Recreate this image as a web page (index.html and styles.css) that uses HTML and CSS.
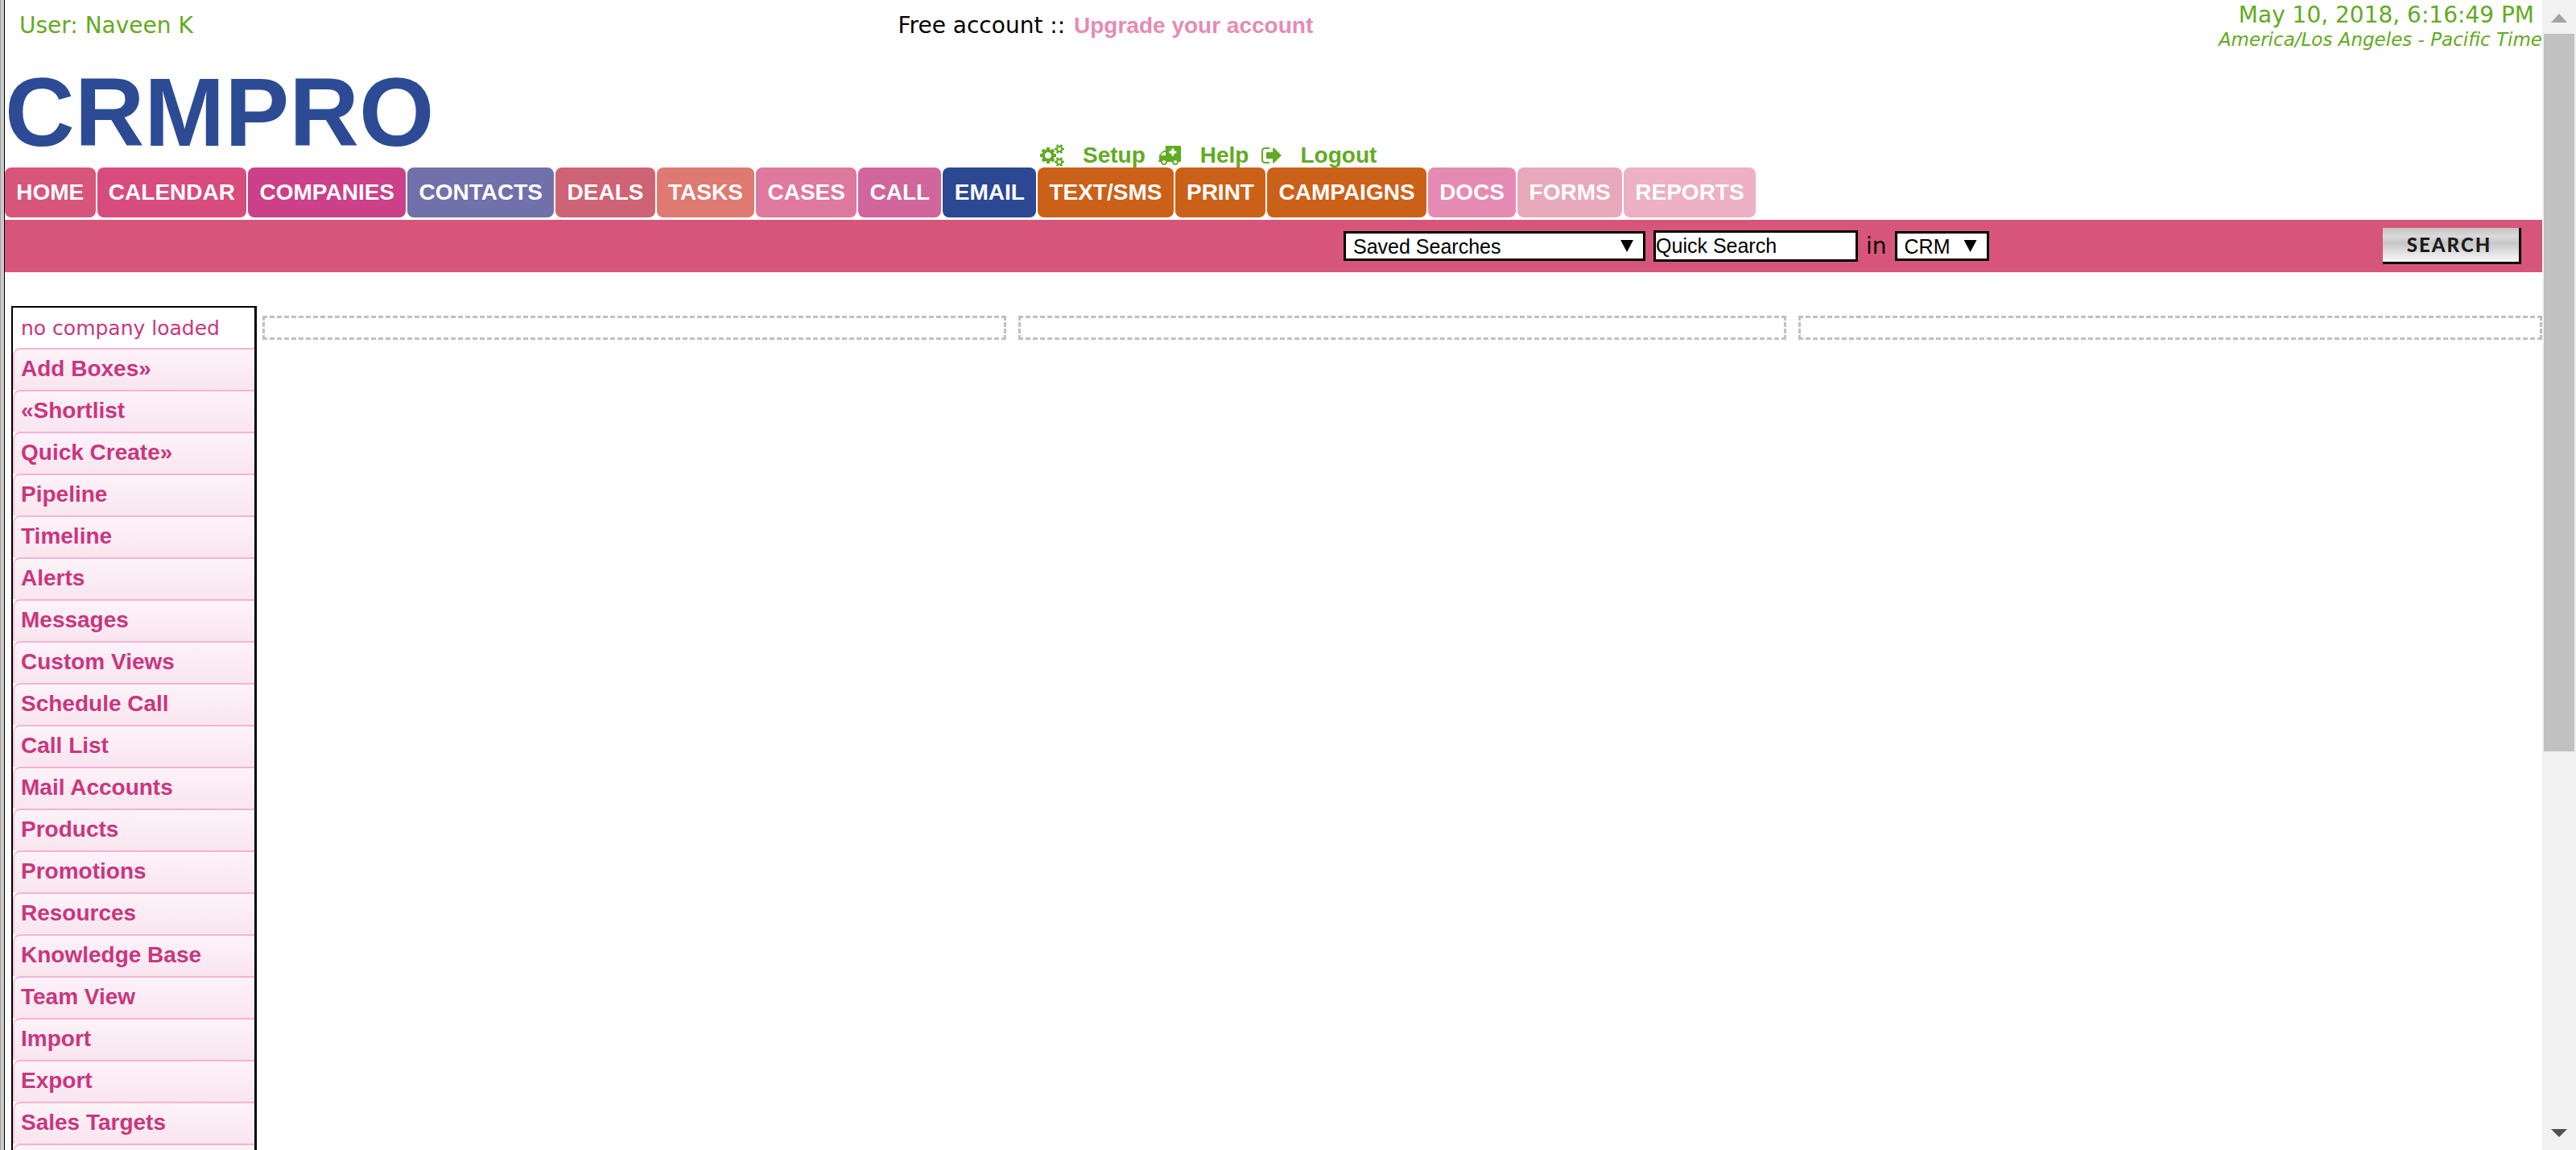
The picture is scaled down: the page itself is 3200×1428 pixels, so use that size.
FILE: index.html
```html
<!DOCTYPE html>
<html lang="en">
<head>
<meta charset="utf-8">
<title>CRMPRO</title>
<link rel="stylesheet" href="styles.css">
</head>
<body>
<div class="frame">
  <div class="frame-edge"></div>
  <div class="page">
    <header class="header">
      <div class="user">User: Naveen K</div>
      <div class="plan">Free account :: <a href="#">Upgrade your account</a></div>
      <div class="clock">
        <div class="date">May 10, 2018, 6:16:49 PM</div>
        <div class="zone">America/Los Angeles - Pacific Time</div>
      </div>
    </header>
    <div class="brand-row">
      <h1 class="logo">CRMPRO</h1>
      <nav class="tools" aria-label="Account">
        <a href="#"><svg class="icon" viewBox="0 0 1920 1792" aria-hidden="true"><path d="M896 896q0-106-75-181t-181-75-181 75-75 181 75 181 181 75 181-75 75-181zm768 512q0-52-38-90t-90-38-90 38-38 90q0 53 37.5 90.5t90.5 37.5 90.5-37.5 37.5-90.5zm0-1024q0-52-38-90t-90-38-90 38-38 90q0 53 37.5 90.5t90.5 37.5 90.5-37.5 37.5-90.5zm-384 421v185q0 10-7 19.5t-16 10.5l-155 24q-11 35-32 76 34 48 90 115 7 11 7 20 0 12-7 19-23 30-82.5 89.5t-78.5 59.5q-11 0-21-7l-115-90q-37 19-77 31-11 108-23 155-7 24-30 24h-186q-11 0-20-7.5t-10-17.5l-23-153q-34-10-75-31l-118 89q-7 7-20 7-11 0-21-8-144-133-144-160 0-9 7-19 10-14 41-53t47-61q-23-44-35-82l-152-24q-10-1-17-9.5t-7-19.5v-185q0-10 7-19.5t16-10.5l155-24q11-35 32-76-34-48-90-115-7-11-7-20 0-12 7-20 22-30 82-89t79-59q11 0 21 7l115 90q34-18 77-32 11-108 23-154 7-24 30-24h186q11 0 20 7.5t10 17.5l23 153q34 10 75 31l118-89q8-7 20-7 11 0 21 8 144 133 144 160 0 8-7 19-12 16-42 54t-45 60q23 48 34 82l152 23q10 2 17 10.5t7 19.5zm640 533v140q0 16-149 31-12 27-30 52 51 113 51 138 0 4-4 7-122 71-124 71-8 0-46-47t-52-68q-20 2-30 2t-30-2q-14 21-52 68t-46 47q-2 0-124-71-4-3-4-7 0-25 51-138-18-25-30-52-149-15-149-31v-140q0-16 149-31 13-29 30-52-51-113-51-138 0-4 4-7 4-2 35-20t59-34 30-16q8 0 46 46.5t52 67.5q20-2 30-2t30 2q51-71 92-112l6-2q4 0 124 70 4 3 4 7 0 25-51 138 17 23 30 52 149 15 149 31zm0-1024v140q0 16-149 31-12 27-30 52 51 113 51 138 0 4-4 7-122 71-124 71-8 0-46-47t-52-68q-20 2-30 2t-30-2q-14 21-52 68t-46 47q-2 0-124-71-4-3-4-7 0-25 51-138-18-25-30-52-149-15-149-31v-140q0-16 149-31 13-29 30-52-51-113-51-138 0-4 4-7 4-2 35-20t59-34 30-16q8 0 46 46.5t52 67.5q20-2 30-2t30 2q51-71 92-112l6-2q4 0 124 70 4 3 4 7 0 25-51 138 17 23 30 52 149 15 149 31z"/></svg>Setup</a>
        <a href="#"><svg class="icon" viewBox="0 0 1920 1792" aria-hidden="true"><path fill-rule="evenodd" d="M640 1408q0-52-38-90t-90-38-90 38-38 90 38 90 90 38 90-38 38-90zm-384-512h384v-256h-158q-14 2-22 9l-195 195q-7 12-9 22v30zm1280 512q0-52-38-90t-90-38-90 38-38 90 38 90 90 38 90-38 38-90zm320-1216v1152q0 26-19 45t-45 19h-128q0 106-75 181t-181 75-181-75-75-181h-384q0 106-75 181t-181 75-181-75-75-181h-128q-64 0-64-64t64-64v-320q0-110 52-162l238-238q42-42 109-42h96v-326q0-64 64-64h1088q64 0 64 64zM1110 350v192h-192v192h192v192h192v-192h192v-192h-192v-192z"/></svg>Help</a>
        <a href="#"><svg class="icon icon-narrow" viewBox="0 0 1664 1792" aria-hidden="true"><path d="M704 1440q0 4 1 20t.5 26.5-3 23.5-10 19.5-20.5 6.5h-320q-119 0-203.5-84.5t-84.5-203.5v-704q0-119 84.5-203.5t203.5-84.5h320q13 0 22.5 9.5t9.5 22.5q0 4 1 20t.5 26.5-3 23.5-10 19.5-20.5 6.5h-320q-66 0-113 47t-47 113v704q0 66 47 113t113 47h312l11.5 1 11.5 3 8 5.5 7 9 2 13.5zm928-544q0 26-19 45l-544 544q-19 19-45 19t-45-19-19-45v-288h-448q-26 0-45-19t-19-45v-384q0-26 19-45t45-19h448v-288q0-26 19-45t45-19 45 19l544 544q19 19 19 45z"/></svg>Logout</a>
      </nav>
    </div>
    <nav class="tabs" aria-label="Main">
      <a class="tab-home" href="#">HOME</a>
      <a class="tab-calendar" href="#">CALENDAR</a>
      <a class="tab-companies" href="#">COMPANIES</a>
      <a class="tab-contacts" href="#">CONTACTS</a>
      <a class="tab-deals" href="#">DEALS</a>
      <a class="tab-tasks" href="#">TASKS</a>
      <a class="tab-cases" href="#">CASES</a>
      <a class="tab-call" href="#">CALL</a>
      <a class="tab-email" href="#">EMAIL</a>
      <a class="tab-outreach" href="#">TEXT/SMS</a>
      <a class="tab-outreach" href="#">PRINT</a>
      <a class="tab-outreach" href="#">CAMPAIGNS</a>
      <a class="tab-docs" href="#">DOCS</a>
      <a class="tab-forms" href="#">FORMS</a>
      <a class="tab-reports" href="#">REPORTS</a>
    </nav>
    <form class="search">
      <div class="search-fields">
        <span class="select select-saved"><select aria-label="Saved searches"><option>Saved Searches</option></select></span>
        <input class="quick" type="text" value="Quick Search" aria-label="Quick search">
        <label for="scope">in</label>
        <span class="select select-scope"><select id="scope"><option>CRM</option></select></span>
      </div>
      <button class="search-button" type="button">SEARCH</button>
    </form>
    <div class="content">
      <aside class="sidebar">
        <div class="sidebar-status">no company loaded</div>
        <ul class="menu">
          <li><a href="#">Add Boxes»</a></li>
          <li><a href="#">«Shortlist</a></li>
          <li><a href="#">Quick Create»</a></li>
          <li><a href="#">Pipeline</a></li>
          <li><a href="#">Timeline</a></li>
          <li><a href="#">Alerts</a></li>
          <li><a href="#">Messages</a></li>
          <li><a href="#">Custom Views</a></li>
          <li><a href="#">Schedule Call</a></li>
          <li><a href="#">Call List</a></li>
          <li><a href="#">Mail Accounts</a></li>
          <li><a href="#">Products</a></li>
          <li><a href="#">Promotions</a></li>
          <li><a href="#">Resources</a></li>
          <li><a href="#">Knowledge Base</a></li>
          <li><a href="#">Team View</a></li>
          <li><a href="#">Import</a></li>
          <li><a href="#">Export</a></li>
          <li><a href="#">Sales Targets</a></li>
          <li class="menu-end"></li>
        </ul>
      </aside>
      <main class="boxes">
        <section class="box"></section>
        <section class="box"></section>
        <section class="box"></section>
      </main>
    </div>
  </div>
  <div class="scrollbar" aria-hidden="true">
    <svg class="arrow-up" viewBox="0 0 20 11"><path d="M10 0L20 11H0z"/></svg>
    <div class="track"><div class="thumb"></div></div>
    <svg class="arrow-down" viewBox="0 0 20 10"><path d="M0 0H20L10 10z"/></svg>
  </div>
</div>
</body>
</html>
```
FILE: styles.css
```css
* { box-sizing: border-box; }
body {
  margin: 0;
  background: #fff;
  color: #000;
  font: 28px/32px "Liberation Sans", Arial, sans-serif;
}
a { text-decoration: none; }

.frame {
  display: grid;
  grid-template-columns: 6px minmax(0, 1fr) 42px;
  grid-template-rows: minmax(0, 1fr);
  height: 100vh;
  overflow: hidden;
}
.frame-edge {
  background: #ccc;
  border-left: 1px solid #a0a0a0;
  border-right: 1px solid #000;
}
.page { min-width: 0; }

/* Account line */
.header {
  display: grid;
  grid-template-columns: 35.2% 1fr auto;
  height: 79px;
  font-family: "DejaVu Sans", Verdana, sans-serif;
}
.user { padding: 16px 0 0 18px; color: #61ab21; }
.plan { padding-top: 16px; }
.plan a {
  margin-left: 2px;
  color: #e58bb3;
  font-family: "Liberation Sans", Arial, sans-serif;
  font-weight: bold;
}
.clock { color: #61ab21; text-align: right; }
.date { padding: 3px 10px 0 0; }
.zone { font-size: 23px; line-height: 28px; font-style: italic; }

/* Logo and tools */
.brand-row {
  display: grid;
  grid-template-columns: 40.8% 1fr;
  align-items: end;
  height: 129px;
}
.logo {
  margin: 0 0 10px;
  color: #2c4b94;
  font-size: 120px;
  line-height: 120px;
}
.tools { display: flex; gap: 15px; }
.tools a {
  display: flex;
  gap: 23px;
  align-items: center;
  color: #61ab21;
  font-weight: bold;
}
.icon { width: 30px; height: 28px; fill: currentColor; }
.icon-narrow { width: 26px; }

/* Tabs */
.tabs { display: flex; gap: 2px; width: 69%; padding-bottom: 3px; }
.tabs a {
  flex: 1 1 auto;
  padding: 15px 14px;
  border-radius: 8px;
  color: #fff;
  font-weight: bold;
  text-align: center;
}
.tab-home { background: #d7557a; }
.tab-calendar { background: #d74c7d; }
.tab-companies { background: #cb4089; }
.tab-contacts { background: #7070aa; }
.tab-deals { background: #ce6376; }
.tab-tasks { background: #de7a71; }
.tab-cases { background: #de789d; }
.tab-call { background: #d0669b; }
.tab-email { background: #2c4892; }
.tab-outreach { background: #cb6118; }
.tab-docs { background: #e58bb3; }
.tab-forms { background: #e8a8bc; }
.tab-reports { background: #edb0c5; }

/* Search bar */
.search {
  display: flex;
  align-items: center;
  justify-content: space-between;
  height: 65px;
  padding-right: 26px;
  background: #d7557a;
}
.search-fields {
  display: flex;
  flex: 1;
  align-items: center;
  gap: 10px;
  margin-left: 53.2%;
}
.search-fields label { font-family: "DejaVu Sans", Verdana, sans-serif; }
.select { position: relative; }
.select::after {
  content: "";
  position: absolute;
  top: 11px;
  right: 15px;
  width: 16px;
  height: 15px;
  background: #000;
  clip-path: polygon(0 0, 100% 0, 50% 100%);
  pointer-events: none;
}
.select select, .quick {
  display: block;
  margin: 0;
  border: 3px solid #000;
  border-radius: 0;
  background: #fff;
  color: #000;
  font: 25px/30px "Liberation Sans", Arial, sans-serif;
}
.select select {
  appearance: none;
  width: 100%;
  height: 37px;
  padding: 0 9px;
}
.select-saved { width: 375px; }
.select-scope { width: 117px; }
.quick { width: 254px; height: 39px; padding: 0; }
.search-button {
  width: 172px;
  height: 45px;
  padding: 0 4px 0 0;
  border: 0 solid #000;
  border-width: 0 3px 3px 0;
  background: linear-gradient(#c4c4c4, #dadada 25%, #c6c6c6 45%, #dedede 70%, #f8f8f8);
  color: #1c1c1c;
  font: 900 24px/30px Lato, sans-serif;
  letter-spacing: 2px;
}

/* Body */
.content { display: flex; padding: 42px 0 0 8px; }
.sidebar {
  flex: none;
  width: 305px;
  border: solid #000;
  border-width: 2px 3px 0 2px;
}
.sidebar-status {
  height: 50px;
  padding: 10px 0 0 10px;
  color: #c9367f;
  font: 25px/32px "DejaVu Sans", Verdana, sans-serif;
}
.menu { margin: 0; padding: 0; list-style: none; }
.menu li {
  height: 52px;
  border-top: 2px solid #f5b3d4;
  border-left: 2px solid #f7c3dc;
  border-top-left-radius: 9px;
  background: linear-gradient(#fdf3f8, #f9e5ef);
}
.menu a {
  display: block;
  padding: 8px 0 0 8px;
  color: #c9367f;
  font-weight: bold;
}
.boxes {
  flex: 1;
  display: grid;
  grid-template-columns: 924fr 953fr 924fr;
  gap: 15px;
  padding: 12px 0 0 7px;
}
.box { height: 30px; border: 3px dashed #c0c0c0; }

/* Scrollbar */
.scrollbar {
  display: flex;
  flex-direction: column;
  align-items: center;
  padding: 17px 2px 16px;
  background: #f1f1f1;
}
.scrollbar svg { flex: none; width: 20px; }
.arrow-up { height: 11px; fill: #a3a3a3; }
.arrow-down { height: 10px; fill: #505050; }
.track { flex: 1; align-self: stretch; padding-top: 14px; }
.thumb { height: 65.5%; background: #c1c1c1; }
```
